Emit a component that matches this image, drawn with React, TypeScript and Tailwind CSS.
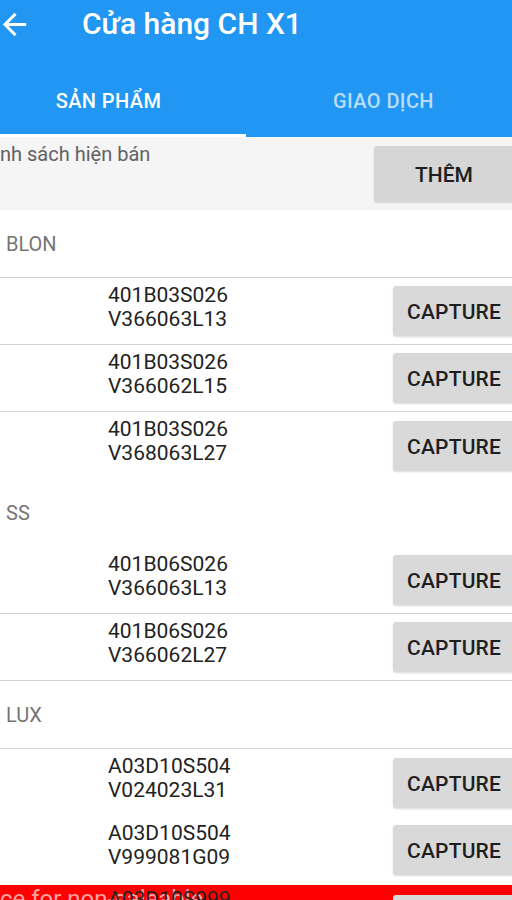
import React from "react";

type Item = { a: string; b: string };

const sections: { label: string; line: boolean; items: { item: Item; line: boolean }[] }[] = [
  {
    label: "BLON",
    line: true,
    items: [
      { item: { a: "401B03S026", b: "V366063L13" }, line: true },
      { item: { a: "401B03S026", b: "V366062L15" }, line: true },
      { item: { a: "401B03S026", b: "V368063L27" }, line: false },
    ],
  },
  {
    label: "SS",
    line: false,
    items: [
      { item: { a: "401B06S026", b: "V366063L13" }, line: true },
      { item: { a: "401B06S026", b: "V366062L27" }, line: true },
    ],
  },
  {
    label: "LUX",
    line: true,
    items: [
      { item: { a: "A03D10S504", b: "V024023L31" }, line: false },
      { item: { a: "A03D10S504", b: "V999081G09" }, line: false },
    ],
  },
];

function CaptureButton({ className = "" }: { className?: string }) {
  return (
    <button
      className={`flex h-[50px] w-[124px] shrink-0 items-center rounded-[3px] bg-[#d9d9d9] pl-[14px] pt-[3px] text-[21px] font-medium leading-none tracking-[0.01em] text-[#1e1e1e] shadow-[0_1px_2px_rgba(0,0,0,0.15)] ${className}`}
    >
      CAPTURE
    </button>
  );
}

function ProductRow({ item, line }: { item: Item; line: boolean }) {
  return (
    <div
      className={`flex h-[67px] items-center ${line ? "border-b border-[#d2d2d2]" : ""}`}
    >
      <div className="w-[393px] shrink-0 self-start pl-[108px] pt-[6px] text-[21px] leading-[23.5px] text-[#222]">
        <div>{item.a}</div>
        <div>{item.b}</div>
      </div>
      <CaptureButton />
    </div>
  );
}

export default function App() {
  return (
    <div className="relative h-[900px] w-[512px] overflow-hidden bg-white font-['Roboto',sans-serif]">
      <header className="bg-[#2196f3] text-white">
        <div className="flex h-[48px] items-center">
          <svg viewBox="0 0 24 24" className="ml-[-3px] h-[35px] w-[35px] shrink-0 fill-white">
            <path d="M20 11H7.83l5.59-5.59L12 4l-8 8 8 8 1.41-1.41L7.83 13H20v-2z" />
          </svg>
          <h1 className="ml-[50px] text-[30px] font-medium leading-[34px]">Cửa hàng CH X1</h1>
        </div>
        <div className="ml-[-29px] grid h-[89px] w-[550px] grid-cols-2">
          <div className="flex flex-col">
            <div className="flex flex-1 items-center justify-center pt-[20px] text-[20px] font-medium tracking-[0.02em]">
              SẢN PHẨM
            </div>
            <div className="h-[3px] bg-white" />
          </div>
          <div className="flex flex-col">
            <div className="flex flex-1 items-center justify-center pt-[20px] text-[20px] font-medium tracking-[0.02em] text-white/70">
              GIAO DỊCH
            </div>
            <div className="h-[3px]" />
          </div>
        </div>
      </header>

      <div className="flex h-[73px] bg-[#f5f5f5]">
        <div className="flex-1 pt-[6px] text-[20px] leading-[23px] text-[#616161]">nh sách hiện bán</div>
        <button className="mr-[-2px] mt-[9px] flex h-[56px] w-[140px] shrink-0 items-center justify-center rounded-[3px] bg-[#d6d6d6] pt-[4px] text-[21px] font-medium text-[#1e1e1e] shadow-[0_1px_2px_rgba(0,0,0,0.12)]">
          THÊM
        </button>
      </div>

      {sections.map((s) => (
        <section key={s.label}>
          <div
            className={`flex h-[68px] items-center pl-[6px] text-[20px] text-[#757575] ${s.line ? "border-b border-[#d2d2d2]" : ""}`}
          >
            {s.label}
          </div>
          {s.items.map((r, i) => (
            <ProductRow key={i} item={r.item} line={r.line} />
          ))}
        </section>
      ))}

      <div className="relative mt-[2px] flex h-[67px] bg-[#ff0000]">
        <div className="absolute left-0 top-0 whitespace-nowrap text-[24px] leading-[28px] text-[#ffa3a3]">
          ce for non-saleable
        </div>
        <div className="relative w-[393px] shrink-0 pl-[108px] pt-[3px] text-[21px] leading-[23.5px] text-[#222]">
          <div>A03D10S999</div>
        </div>
        <CaptureButton className="relative mt-[10px]" />
      </div>
    </div>
  );
}
